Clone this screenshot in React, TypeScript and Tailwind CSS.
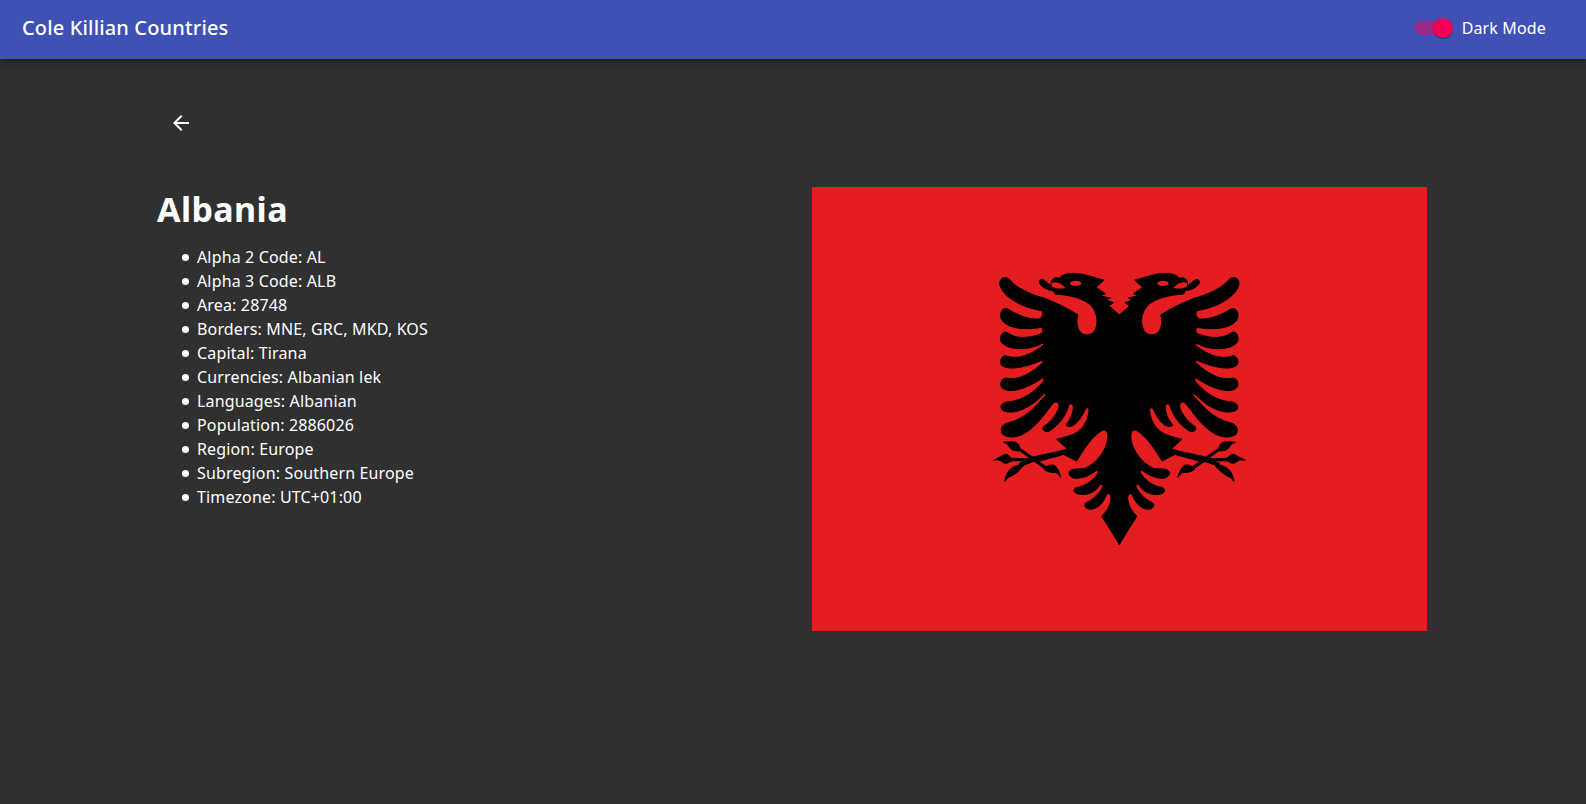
import React from 'react';

const details = [
  'Alpha 2 Code: AL',
  'Alpha 3 Code: ALB',
  'Area: 28748',
  'Borders: MNE, GRC, MKD, KOS',
  'Capital: Tirana',
  'Currencies: Albanian lek',
  'Languages: Albanian',
  'Population: 2886026',
  'Region: Europe',
  'Subregion: Southern Europe',
  'Timezone: UTC+01:00',
];

function EagleHalf() {
  return (
    <g fill="#000" stroke="#000" strokeWidth="3">
      {/* head, wings, body and tail */}
      <path d="M480 195 L478 195 L447 167 L461 158 L438 150 L452 144 L420 138 L436 131 L408 112 L432 90
        C405 85 375 70 340 70 C320 70 305 75 298 85 C285 80 272 88 274 100 L270 104
        C262 100 255 90 245 88 C238 89 236 96 240 102 C248 114 262 120 280 122 L285 132
        C330 135 374 145 396 170 C414 192 416 225 402 245 C392 256 374 258 362 247 C350 234 348 210 354 195
        C330 178 290 160 255 145
        C215 135 170 115 150 90 C140 78 120 80 119 100 C120 130 170 170 246 182 Q253 195 240 207
        C200 210 165 190 145 178 C130 170 120 185 122 200 C125 225 170 245 246 232 Q252 245 246 250
        C205 268 165 265 145 250 C130 238 120 255 122 270 C125 295 195 310 250 278 L250 285
        C215 315 170 330 140 318 C125 312 115 340 128 348 C150 362 205 350 247 330 L250 336
        C215 370 175 392 142 385 C125 380 115 405 128 415 C150 432 205 415 250 382 L252 392
        C225 425 190 450 150 455 C130 455 118 465 125 478 C135 492 195 495 255 428 L257 436
        C225 470 200 505 140 520 C122 525 120 545 130 555 C160 570 195 555 220 530
        C245 510 265 475 280 460 C288 452 298 458 297 470 C295 485 275 515 250 530 C245 540 255 548 268 543
        C290 530 315 505 327 465 C332 458 340 462 340 472 C340 490 330 510 318 525 C320 532 335 530 342 525
        C360 512 370 490 377 476 C382 470 388 474 387 482 C385 505 375 530 352 546 C335 558 310 562 290 568
        L322 597 L305 602 L310 613 L350 633
        C370 600 395 560 425 542 C440 535 445 550 443 565 C440 600 410 640 375 655 C355 658 340 655 330 662
        C322 670 330 682 345 685 C375 685 395 672 408 662 C416 660 416 668 410 675 C395 695 375 708 352 712
        C340 715 338 725 350 731 C375 738 405 730 420 704 C428 700 430 708 425 716 C420 725 400 750 380 757
        C372 762 372 772 385 777 C410 782 430 760 440 733 C446 728 453 735 453 745 C450 770 440 785 425 798
        L478 883 L480 883 Z" />
      {/* leg */}
      <path d="M215 622 L305 602 L312 613 L225 637 Z" />
      <path d="M152 625 L225 626 L225 633 L152 632 Z" />
      <path d="M172 597 L177 593 L262 652 L256 658 Z" />
      <path d="M178 640 L225 622 L232 630 L184 648 Z" />
      {/* leaves */}
      <path d="M155 625 C148 618 142 612 135 613 C128 614 122 622 100 630 C108 631 115 629 120 631 C126 636 132 640 138 640 C145 639 150 634 157 632 Z" />
      <path d="M180 600 C180 592 177 583 170 578 C160 574 145 575 130 577 C138 580 144 583 146 588 C150 595 155 600 165 602 L176 603 Z" />
      <path d="M186 642 C172 646 158 650 148 660 C140 670 135 682 135 694 C140 685 147 680 156 677 C168 672 178 660 190 648 Z" />
      <path d="M255 652 C265 646 275 643 282 646 C292 652 298 665 302 682 C296 672 290 667 282 667 C270 668 260 664 252 658 Z" />
    </g>
  );
}

function Flag() {
  return (
    <svg viewBox="-444 -189 1845 1332" className="h-[444px] w-[615px] shrink-0">
      <rect x="-444" y="-189" width="1845" height="1332" fill="#e41e20" />
      <EagleHalf />
      <g transform="translate(956 0) scale(-1 1)">
        <EagleHalf />
      </g>
      {/* eyes and open beaks */}
      <ellipse cx="347" cy="100" rx="17" ry="8" fill="#e41e20" />
      <ellipse cx="609" cy="100" rx="17" ry="8" fill="#e41e20" />
      <path d="M274 100 C285 93 300 98 316 113 C302 118 288 116 276 110 Z" fill="#e41e20" />
      <path d="M682 100 C671 93 656 98 640 113 C654 118 668 116 680 110 Z" fill="#e41e20" />
    </svg>
  );
}

export default function App() {
  return (
    <div className="min-h-screen bg-[#303030] font-['Noto_Sans',sans-serif] text-white">
      <header className="flex h-[59px] items-center justify-between bg-[#3f51b5] pb-1 pl-[22px] pr-[40px] shadow-[0_2px_4px_-1px_rgba(0,0,0,0.2),0_4px_5px_0_rgba(0,0,0,0.14),0_1px_10px_0_rgba(0,0,0,0.12)]">
        <h6 className="text-xl font-medium tracking-[0.15px]">Cole Killian Countries</h6>
        <label className="flex items-center gap-[9px] text-base tracking-[0.15px]">
          <span className="relative flex h-5 w-[38px] items-center">
            <span className="h-[14px] w-[34px] rounded-full bg-[#9a2988]"></span>
            <span className="absolute left-[18px] h-5 w-5 rounded-full bg-[#f50057] shadow-[0_2px_1px_-1px_rgba(0,0,0,0.2),0_1px_1px_0_rgba(0,0,0,0.14),0_1px_3px_0_rgba(0,0,0,0.12)]"></span>
          </span>
          Dark Mode
        </label>
      </header>

      <main className="pl-[157px] pr-[159px] pt-10">
        <button className="flex h-12 w-12 items-center justify-center rounded-full">
          <svg viewBox="0 0 24 24" className="h-6 w-6" fill="currentColor">
            <path d="M20 11H7.83l5.59-5.59L12 4l-8 8 8 8 1.41-1.41L7.83 13H20v-2z" />
          </svg>
        </button>
        <div className="mt-10 flex justify-between">
          <div>
            <h4 className="text-[34px] font-bold leading-[44px] tracking-[0.4px]">Albania</h4>
            <ul className="mt-[14px] pl-10 text-base leading-6 tracking-[0.15px]">
              {details.map((d) => (
                <li
                  key={d}
                  className="relative before:absolute before:left-[-15px] before:top-[9px] before:h-[7px] before:w-[7px] before:rounded-full before:bg-white"
                >
                  {d}
                </li>
              ))}
            </ul>
          </div>
          <Flag />
        </div>
      </main>
    </div>
  );
}
